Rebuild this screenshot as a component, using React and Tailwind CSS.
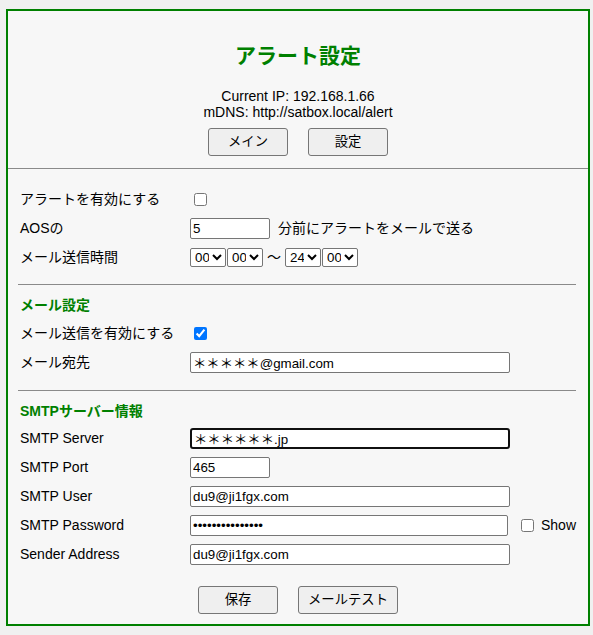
import React, { useState } from 'react';

const HOURS = Array.from({ length: 25 }, (_, i) => String(i).padStart(2, '0'));
const MINUTES = ['00', '10', '20', '30', '40', '50'];

const inputCls =
  'h-[21px] border border-[#767676] rounded-[2px] bg-white px-[2px] text-[13.333px] text-black outline-none';
const selectCls =
  'h-[19px] w-[36px] border border-[#767676] rounded-[2px] bg-white text-[13.333px] text-black';
const btnCls =
  'h-[28px] border border-[#767676] rounded-[3px] bg-[#efefef] text-[13.333px] text-black';

const Row = ({ label, children }) => (
  <div className="flex h-[29px] items-center">
    <span className="w-[172px] shrink-0 pl-[2px]">{label}</span>
    {children}
  </div>
);

const TimeSelect = ({ options, value }) => (
  <select defaultValue={value} className={selectCls}>
    {options.map((o) => (
      <option key={o} value={o}>{o}</option>
    ))}
  </select>
);

export default function App() {
  const [showPass, setShowPass] = useState(false);

  return (
    <div className="min-h-[635px] bg-[#f0f0f0] pt-[9px] pl-[6px] font-['Liberation_Sans','Noto_Sans_CJK_JP',sans-serif] text-[14px] text-black">
      <div className="w-[584px] border-2 border-[#008000] bg-[#f7f7f7]">
        {/* header */}
        <div className="pt-[31px] pb-[12px] text-center">
          <h1 className="h-[28px] text-[21px] font-bold leading-[28px] text-[#008000]">アラート設定</h1>
          <div className="mt-[18px] leading-[16px]">
            <p>Current IP: 192.168.1.66</p>
            <p>mDNS: http://satbox.local/alert</p>
          </div>
          <div className="mt-[8px] flex justify-center gap-[20px]">
            <button className={`${btnCls} w-[80px]`}>メイン</button>
            <button className={`${btnCls} w-[80px]`}>設定</button>
          </div>
        </div>
        <div className="h-px bg-[#8a8a8a]" />

        <div className="pl-[10px] pr-[12px] pt-[16px] pb-[10px]">
          {/* alert */}
          <Row label="アラートを有効にする">
            <input type="checkbox" className="ml-[4px] h-[13px] w-[13px]" />
          </Row>
          <Row label="AOSの">
            <input type="text" defaultValue="5" className={`${inputCls} w-[80px]`} />
            <span className="ml-[8px]">分前にアラートをメールで送る</span>
          </Row>
          <Row label="メール送信時間">
            <div className="flex items-center gap-[1px]">
              <TimeSelect options={HOURS} value="00" />
              <TimeSelect options={MINUTES} value="00" />
            </div>
            <span className="mx-[4px]">～</span>
            <div className="flex items-center gap-[1px]">
              <TimeSelect options={HOURS} value="24" />
              <TimeSelect options={MINUTES} value="00" />
            </div>
          </Row>

          <div className="mt-[12px] h-px bg-[#8a8a8a]" />

          {/* mail */}
          <h2 className="mt-[10px] mb-[4px] h-[20px] pl-[2px] font-bold leading-[20px] text-[#008000]">メール設定</h2>
          <Row label="メール送信を有効にする">
            <input type="checkbox" defaultChecked className="ml-[4px] h-[13px] w-[13px]" />
          </Row>
          <Row label="メール宛先">
            <input type="text" defaultValue="＊＊＊＊＊@gmail.com" className={`${inputCls} w-[320px]`} />
          </Row>

          <div className="mt-[13px] h-px bg-[#8a8a8a]" />

          {/* smtp */}
          <h2 className="mt-[10px] mb-[3px] h-[20px] pl-[2px] font-bold leading-[20px] text-[#008000]">SMTPサーバー情報</h2>
          <Row label="SMTP Server">
            <input
              type="text"
              defaultValue="＊＊＊＊＊＊.jp"
              className="h-[21px] w-[320px] rounded-[3px] border-2 border-[#101010] bg-white px-[2px] text-[13.333px] text-black outline-none"
            />
          </Row>
          <Row label="SMTP Port">
            <input type="text" defaultValue="465" className={`${inputCls} w-[80px]`} />
          </Row>
          <Row label="SMTP User">
            <input type="text" defaultValue="du9@ji1fgx.com" className={`${inputCls} w-[320px]`} />
          </Row>
          <Row label="SMTP Password">
            <input
              type={showPass ? 'text' : 'password'}
              defaultValue="abcdefghijklmno"
              className={`${inputCls} w-[320px]`}
            />
            <label className="ml-[13px] flex items-center gap-[7px]">
              <input
                type="checkbox"
                checked={showPass}
                onChange={(e) => setShowPass(e.target.checked)}
                className="h-[13px] w-[13px]"
              />
              Show
            </label>
          </Row>
          <Row label="Sender Address">
            <input type="text" defaultValue="du9@ji1fgx.com" className={`${inputCls} w-[320px]`} />
          </Row>

          <div className="mt-[17px] flex justify-center gap-[20px] pl-[2px]">
            <button className={`${btnCls} w-[80px]`}>保存</button>
            <button className={`${btnCls} w-[100px]`}>メールテスト</button>
          </div>
        </div>
      </div>
    </div>
  );
}
